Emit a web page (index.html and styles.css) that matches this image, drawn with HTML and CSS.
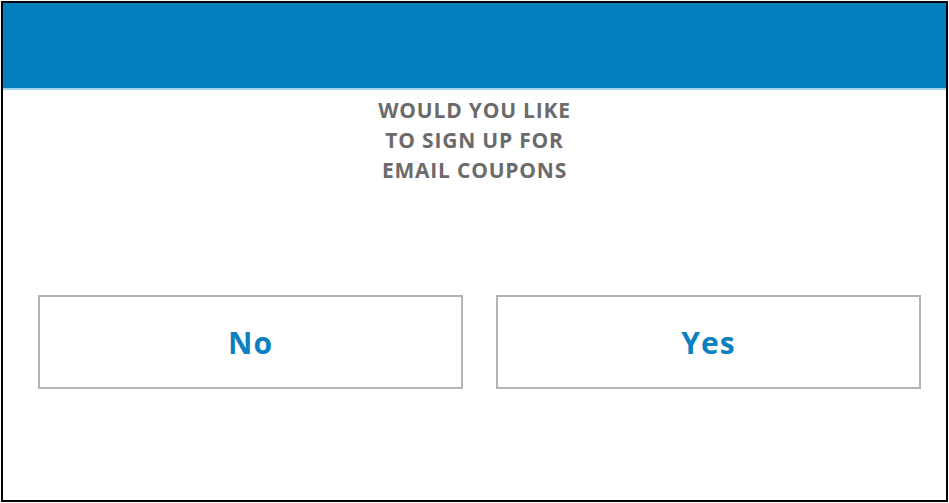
FILE: index.html
```html
<!DOCTYPE html>
<html lang="en">
  <head>
    <meta charset="UTF-8" />
    <title>Email Coupons</title>
    <link rel="stylesheet" href="styles.css">
  </head>
  <body>
    <div class="frame">
      <div class="header"></div>
      <p class="question">WOULD YOU LIKE<br />TO SIGN UP FOR<br />EMAIL COUPONS</p>
      <div class="choices">
        <button class="choice">No</button>
        <button class="choice">Yes</button>
      </div>
    </div>
  </body>
</html>
```

FILE: styles.css
```css
body {
  margin: 0;
  font-family: "Open Sans", Arial, sans-serif;
  background-color: white;
}
.frame {
  box-sizing: border-box;
  margin: 1px;
  width: 947px;
  height: 501px;
  border: 2px solid #000;
  background-color: white;
}
.header {
  height: 85px;
  background-color: #0280bf;
  border-bottom: 2px solid #9fd2ec;
}
.question {
  margin: 5px 0 0;
  text-align: center;
  font-size: 21px;
  font-weight: bold;
  letter-spacing: 0.8px;
  line-height: 30px;
  color: #6b6b6b;
}
.choices {
  display: grid;
  grid-template-columns: 425px 425px;
  column-gap: 33px;
  margin-top: 110px;
  padding-left: 35px;
}
.choice {
  box-sizing: border-box;
  height: 94px;
  background-color: white;
  border: 2px solid #b3b3b3;
  font-family: "Open Sans", Arial, sans-serif;
  font-size: 30px;
  font-weight: bold;
  letter-spacing: 1px;
  color: #0a80c0;
  cursor: pointer;
}
```
